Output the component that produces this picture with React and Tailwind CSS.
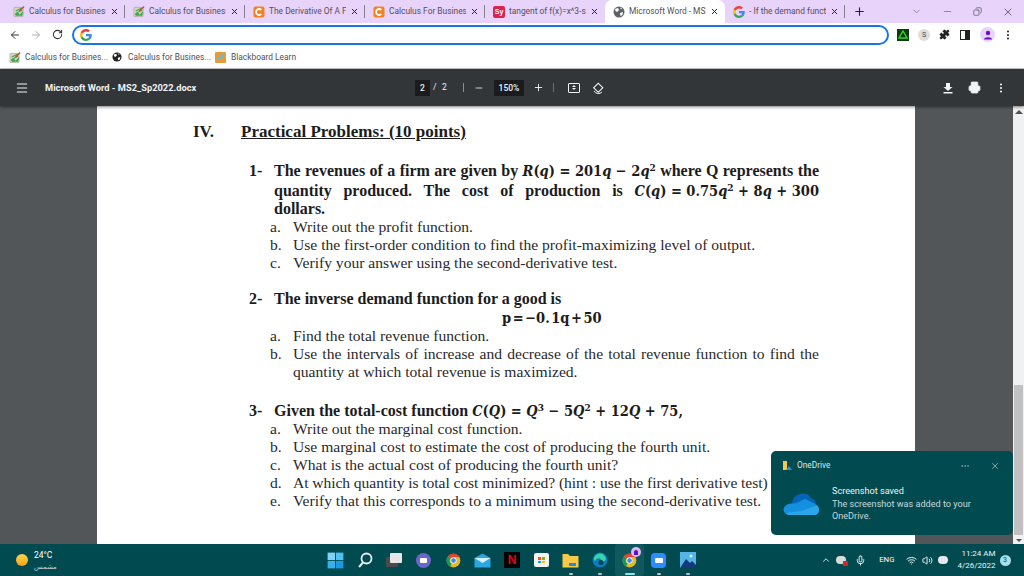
import React from 'react';
import { ArrowLeft, ArrowRight, RotateCw, ChevronDown, Minus, Plus, X, Menu, Printer, EllipsisVertical, Puzzle, Ellipsis, ChevronUp, Mic, Wifi, Volume2, Copy } from 'lucide-react';

const Calc = () => (
  <svg width="12" height="13" viewBox="0 0 13 13" className="shrink-0">
    <rect x="1" y="2" width="10" height="10" rx="1" fill="#d8d4c8" stroke="#9a9a8c" strokeWidth="0.6" />
    <path d="M2 9 L5 7 L7 10 L11 6 L10 11 L3 11Z" fill="#3aa84a" />
    <path d="M3 6 L9 3 M4 8 L10 5" stroke="#3aa84a" strokeWidth="1.2" />
    <path d="M7 6 L12 1" stroke="#c0502c" strokeWidth="1.5" />
  </svg>
);
const CIcon = () => (
  <svg width="12" height="12" viewBox="0 0 12 12" className="shrink-0">
    <rect width="11" height="11" x="0.5" y="0.5" rx="2" fill="#f5821f" />
    <path d="M8.3 4 A3 3 0 1 0 8.3 8" stroke="#fff" strokeWidth="1.8" fill="none" />
  </svg>
);
const Sy = () => (
  <div className="w-[12px] h-[12px] rounded-[2px] bg-[#dc2350] text-white text-[7px] font-bold leading-[12px] text-center shrink-0 font-['Liberation_Sans',sans-serif]">Sy</div>
);
const Globe = ({ s = 12, c = '#5f6368' }) => (
  <svg width={s} height={s} viewBox="0 0 12 12" className="shrink-0">
    <circle cx="6" cy="6" r="5.5" fill={c} />
    <path d="M2 3 L5 2 L6 4 L4 6 L2.5 5Z M7 7 L10 6 L9.5 9 L7.5 10Z M7 1.5 L9 2.5 L8 3.5Z" fill="#fff" />
  </svg>
);
const G = () => (
  <svg width="12" height="12" viewBox="0 0 48 48" className="shrink-0">
    <path fill="#EA4335" d="M24 9.5c3.5 0 6.700 1.200 9.200 3.600l6.900-6.900C35.900 2.400 30.400 0 24 0 14.600 0 6.500 5.400 2.600 13.200l8 6.200C12.500 13.700 17.800 9.500 24 9.500z" />
    <path fill="#4285F4" d="M47 24.500c0-1.600-.1-3.100-.4-4.500H24v9h12.900c-.6 3-2.200 5.500-4.700 7.200l7.700 6c4.500-4.200 7.100-10.300 7.100-17.700z" />
    <path fill="#FBBC05" d="M10.500 28.600c-.5-1.500-.8-3-.8-4.600s.3-3.100.8-4.600l-8-6.200C.9 16.500 0 20.100 0 24s.9 7.500 2.600 10.800l7.900-6.200z" />
    <path fill="#34A853" d="M24 48c6.500 0 11.900-2.100 15.900-5.800l-7.700-6c-2.200 1.400-4.900 2.300-8.200 2.300-6.200 0-11.500-4.200-13.400-9.900l-8 6.200C6.500 42.600 14.600 48 24 48z" />
  </svg>
);

const Tab = ({ icon, text, active, sep = true }) => (
  <div className={`relative flex items-center w-[120px] h-[23px] pl-[8px] pr-[6px] gap-[4px] ${active ? 'bg-white rounded-t-[7px]' : ''}`}>
    {icon}
    <span className="flex-1 min-w-0 overflow-hidden whitespace-nowrap text-[8.4px] text-[#50505a]">{text}</span>
    <X size={9} strokeWidth={2.6} className="text-[#222] shrink-0" />
    {sep && <div className="absolute right-0 top-[5px] h-[13px] w-px bg-[#85808a]" />}
  </div>
);

const Line = ({ cls = '', children }) => <div className={`h-[18px] leading-[18px] whitespace-nowrap ${cls}`}>{children}</div>;
const M = ({ children, cls = '' }) => <span className={`inline-block font-['DejaVu_Serif_Condensed','DejaVu_Serif',serif] text-[14.500px] font-bold [text-align-last:left] ${cls}`}>{children}</span>;
const I = ({ children }) => <span className="italic">{children}</span>;
const Sup = ({ children }) => <span className="text-[10px] leading-none align-[5px]">{children}</span>;
const Sub = ({ l, children }) => (
  <div className="flex h-[18px] leading-[18px] whitespace-nowrap pl-[21px] text-[#2a2a2a]">
    <span className="w-[23px] shrink-0">{l}.</span>
    <span>{children}</span>
  </div>
);
const Num = ({ n, children, cls = '' }) => (
  <div className={`flex h-[20px] leading-[20px] font-bold whitespace-nowrap text-[#1c1c1c] text-[16px] ${cls}`}>
    <span className="w-[25px] shrink-0">{n ? `${n}-` : ''}</span>
    {children}
  </div>
);

const tb = 'text-[#f1f3f4]';
const Win = () => (
  <svg width="21" height="21" viewBox="0 0 24 24"><rect x="3" y="3" width="8.500" height="8.500" fill="#7ed3f7" /><rect x="12.500" y="3" width="8.500" height="8.500" fill="#4fc0f2" /><rect x="3" y="12.500" width="8.500" height="8.500" fill="#36b1ec" /><rect x="12.500" y="12.500" width="8.500" height="8.500" fill="#1a9ae0" /></svg>
);
const Chrome = ({ s = 18 }) => (
  <svg width={s} height={s} viewBox="0 0 24 24">
    <circle cx="12" cy="12" r="11" fill="#e8b923" />
    <path d="M12 1 A11 11 0 0 1 21.500 6.500 L12 6.500 A5.500 5.500 0 0 0 7.200 9.300 L3 5 A11 11 0 0 1 12 1Z" fill="#db4437" />
    <path d="M3 5 L7.200 9.300 A5.500 5.500 0 0 0 9 17 L6.300 21.500 A11 11 0 0 1 3 5Z" fill="#0f9d58" />
    <circle cx="12" cy="12" r="4.500" fill="#4285f4" stroke="#fff" strokeWidth="1.500" />
  </svg>
);
const TaskIcon = ({ children, dot, active }) => (
  <div className={`relative w-[29.4px] h-[32px] flex items-center justify-center ${active ? 'bg-[#11585e] rounded-[3px]' : ''}`}>
    {children}
    {dot && <div className={`absolute bottom-[1px] left-1/2 -translate-x-1/2 h-[2px] rounded-full ${active ? 'w-[10px] bg-[#8fe3ea]' : 'w-[4px] bg-[#b8c4c6]'}`} />}
  </div>
);

export default function App() {
  return (
    <div className="relative w-[1024px] h-[576px] overflow-hidden flex flex-col bg-white font-['Roboto',sans-serif]">
      {/* tab strip */}
      <div className="h-[23px] bg-[#e8d3fb] flex items-center pl-[5px] shrink-0">
        <Tab icon={<Calc />} text="Calculus for Business I" />
        <Tab icon={<Calc />} text="Calculus for Business I" />
        <Tab icon={<CIcon />} text="The Derivative Of A Function" />
        <Tab icon={<CIcon />} text="Calculus For Business" />
        <Tab icon={<Sy />} text="tangent of f(x)=x^3-sin" sep={false} />
        <Tab icon={<Globe />} text="Microsoft Word - MS2_Sp" active sep={false} />
        <Tab icon={<G />} text="- If the demand function" />
        <Plus size={13} strokeWidth={2} className="text-[#222] ml-[8px]" />
        <div className="flex-1" />
        <ChevronDown size={11} className="text-[#8a8494] mr-[20px]" />
        <Minus size={11} className="text-[#8a8494] mr-[20px]" />
        <Copy size={9} className="text-[#5f5a68] mr-[20px] -scale-x-100" />
        <X size={12} className="text-[#6a6474] mr-[10px]" />
      </div>
      {/* address row */}
      <div className="h-[23px] flex items-center shrink-0 pl-[9px]">
        <ArrowLeft size={12} strokeWidth={2} className="text-[#333]" />
        <ArrowRight size={12} strokeWidth={2} className="text-[#b0b0b0] ml-[9px]" />
        <RotateCw size={11} strokeWidth={2.2} className="text-[#333] ml-[10px]" />
        <div className="ml-[9px] w-[817px] h-[20px] rounded-full border-2 border-[#1a73e8] flex items-center pl-[6px]"><G /></div>
        <div className="w-[12px] h-[12px] ml-[8px] bg-[#0c3b12] flex items-center justify-center">
          <svg width="10" height="10" viewBox="0 0 10 10"><path d="M5 1 L9 8 L1 8Z" fill="none" stroke="#37d41f" strokeWidth="1.400" /></svg>
        </div>
        <div className="w-[12px] h-[12px] ml-[9px] rounded-full bg-[#dcdcdc] text-[7px] leading-[12px] text-center text-[#444]">S</div>
        <Puzzle size={11} fill="#222" strokeWidth={1} className="text-[#222] ml-[9px]" />
        <div className="w-[10px] h-[10px] ml-[10px] border-[1.5px] border-[#222] flex justify-end"><div className="w-[4px] h-full bg-[#222]" /></div>
        <div className="w-[15px] h-[15px] ml-[10px] rounded-full bg-[#e8d3fb] flex items-center justify-center">
          <svg width="10" height="10" viewBox="0 0 10 10"><circle cx="5" cy="3" r="2.200" fill="#6a0dc4" /><path d="M1 9.500 C1 6.500 9 6.500 9 9.500Z" fill="#6a0dc4" /></svg>
        </div>
        <EllipsisVertical size={12} strokeWidth={2.4} className="text-[#333] ml-[7px]" />
      </div>
      {/* bookmarks */}
      <div className="h-[22px] flex items-center shrink-0 pl-[9px] text-[8.4px] text-[#50505a] border-b border-[#cfcfcf] box-content">
        <Calc />
        <span className="ml-[4px] w-[76px] whitespace-nowrap">Calculus for Busines...</span>
        <span className="ml-[11px]"><Globe c="#222" s={10} /></span>
        <span className="ml-[6px] w-[76px] whitespace-nowrap">Calculus for Busines...</span>
        <div className="ml-[11px] w-[11px] h-[11px] rounded-[1px] bg-[#e89a35] flex items-center justify-center">
          <div className="w-[8px] h-[2px] bg-[#5cc0e8] -rotate-45" />
        </div>
        <span className="ml-[5px] whitespace-nowrap">Blackboard Learn</span>
      </div>
      {/* pdf toolbar */}
      <div className={`h-[37px] bg-[#323639] shrink-0 flex items-center ${tb} relative z-10 shadow-[0_1px_3px_rgba(0,0,0,0.5)]`}>
        <Menu size={14} strokeWidth={1.800} className="ml-[15px]" />
        <span className="ml-[16px] w-[370px] text-[9.300px] font-bold whitespace-nowrap">Microsoft Word - MS2_Sp2022.docx</span>
        <span className="w-[15px] h-[16px] bg-[#191b1c] text-[8.500px] font-medium leading-[16px] text-center">2</span>
        <span className="ml-[3px] text-[8.500px] w-[9px]">/</span>
        <span className="text-[8.500px] w-[21px]">2</span>
        <div className="w-px h-[9px] bg-[#8a8d90]" />
        <Minus size={10} strokeWidth={2} className="ml-[10px]" />
        <span className="ml-[10px] w-[30px] h-[16px] bg-[#191b1c] text-[8.500px] font-medium leading-[16px] text-center">150%</span>
        <Plus size={11} strokeWidth={2} className="ml-[9px]" />
        <div className="w-px h-[9px] bg-[#6a6d70] ml-[9px]" />
        <div className="ml-[14px] w-[12px] h-[10px] border border-[#f1f3f4] rounded-[1px] flex flex-col items-center justify-center gap-[1px]">
          <div className="w-0 h-0 border-x-[2px] border-x-transparent border-b-[2px] border-b-[#f1f3f4]" />
          <div className="w-0 h-0 border-x-[2px] border-x-transparent border-t-[2px] border-t-[#f1f3f4]" />
        </div>
        <svg width="14" height="14" viewBox="0 0 14 14" className="ml-[11px]"><rect x="4" y="3.500" width="6.500" height="6.500" transform="rotate(45 7.250 6.750)" fill="none" stroke="#f1f3f4" strokeWidth="1.100" /><path d="M3 10 A5 5 0 0 0 11 11" fill="none" stroke="#f1f3f4" strokeWidth="1" /></svg>
        <div className="flex-1" />
        <svg width="12" height="12" viewBox="0 0 12 12" className="mr-[13.500px]"><path d="M4 1 H8 V5 H10.500 L6 9 L1.500 5 H4Z M1.500 10 H10.500 V11.500 H1.500Z" fill="#f1f3f4" /></svg>
        <Printer size={13} fill="#f1f3f4" strokeWidth={1.600} className="mr-[14.500px]" />
        <EllipsisVertical size={12} strokeWidth={2.400} className="mr-[17px]" />
      </div>
      {/* content */}
      <div className="flex-1 min-h-0 flex bg-[#525659]">
        <div className="flex-1 min-w-0 pl-[97px]">
          <div className="w-[818px] h-full bg-white font-['Liberation_Serif',serif] text-[15.600px] text-[#222] pt-[15px] overflow-hidden">
            <div className="flex h-[22px] leading-[22px] font-bold text-[#1c1c1c] pl-[96px] text-[17px]">
              <span className="w-[48px]">IV.</span>
              <span className="underline">Practical Problems: (10 points)</span>
            </div>
            <div className="pl-[152px] mt-[18px]">
              <Num n="1">
                <span className="w-[545px] [text-align-last:justify]">The revenues of a firm are given by <M><I>R</I>(<I>q</I>) = 201<I>q</I> − 2<I>q</I><Sup>2</Sup></M> where Q represents the</span>
              </Num>
              <Num n="">
                <span className="w-[545px] [text-align-last:justify]">quantity produced. The cost of production is <M><I>C</I>(<I>q</I>) = 0.75<I>q</I><Sup>2</Sup> + 8<I>q</I> + 300</M></span>
              </Num>
              <Line cls="pl-[25px] font-bold text-[#1c1c1c] text-[16px] -mt-[1px]">dollars.</Line>
              <Sub l="a">Write out the profit function.</Sub>
              <Sub l="b">Use the first-order condition to find the profit-maximizing level of output.</Sub>
              <Sub l="c">Verify your answer using the second-derivative test.</Sub>
              <Num n="2" cls="mt-[17px]">The inverse demand function for a good is</Num>
              <div className="h-[18px] leading-[18px] pl-[253px] text-[#1c1c1c]"><M cls="[word-spacing:-3px]">p = −0. 1q + 50</M></div>
              <Sub l="a">Find the total revenue function.</Sub>
              <div className="flex h-[18px] leading-[18px] whitespace-nowrap pl-[21px] text-[#2a2a2a]">
                <span className="w-[23px] shrink-0">b.</span>
                <span className="w-[526px] [text-align-last:justify]">Use the intervals of increase and decrease of the total revenue function to find the</span>
              </div>
              <Line cls="pl-[44px] text-[#2a2a2a]">quantity at which total revenue is maximized.</Line>
              <Num n="3" cls="mt-[20px]">Given the total-cost function <span className="ml-[4px]"><M><I>C</I>(<I>Q</I>) = <I>Q</I><Sup>3</Sup> − 5<I>Q</I><Sup>2</Sup> + 12<I>Q</I> + 75,</M></span></Num>
              <div className="-mt-[1px]" />
              <Sub l="a">Write out the marginal cost function.</Sub>
              <Sub l="b">Use marginal cost to estimate the cost of producing the fourth unit.</Sub>
              <Sub l="c">What is the actual cost of producing the fourth unit?</Sub>
              <Sub l="d"><span className="tracking-[-0.07px]">At which quantity is total cost minimized? (hint : use the first derivative test)</span></Sub>
              <Sub l="e">Verify that this corresponds to a minimum using the second-derivative test.</Sub>
            </div>
          </div>
        </div>
        <div className="w-[11px] bg-[#f1f1f1] flex flex-col items-center shrink-0">
          <div className="h-[12px] flex items-center justify-center">
            <div className="w-0 h-0 border-x-[4px] border-x-transparent border-b-[4px] border-b-[#505050]" />
          </div>
          <div className="w-[9px] h-[150px] bg-[#c1c1c1] mt-[267px]" />
          <div className="flex-1" />
          <div className="h-[8px] flex items-center justify-center">
            <div className="w-0 h-0 border-x-[3px] border-x-transparent border-t-[3px] border-t-[#505050]" />
          </div>
        </div>
      </div>
      {/* taskbar */}
      <div className="h-[32px] bg-[#004a50] shrink-0 flex items-center text-white relative">
        <div className="ml-[16px] w-[12px] h-[12px] rounded-full bg-gradient-to-b from-[#fdd44a] to-[#f5a30f]" />
        <div className="ml-[6px] w-[287px] flex flex-col leading-none">
          <span className="text-[8.500px] mt-[1px]">24°C</span>
          <span className="text-[7px] text-[#c4d4d6] mt-[3px] font-['Noto_Sans',sans-serif]">مشمس</span>
        </div>
        <TaskIcon><Win /></TaskIcon>
        <TaskIcon>
          <svg width="18" height="18" viewBox="0 0 18 18"><circle cx="10.500" cy="7.500" r="5" fill="none" stroke="#e8eeee" strokeWidth="1.800" /><path d="M7 11.500 L3 16" stroke="#e8eeee" strokeWidth="2" /></svg>
        </TaskIcon>
        <TaskIcon>
          <div className="relative w-[16px] h-[14px]">
            <div className="absolute left-0 bottom-0 w-[12px] h-[10px] bg-[#4a4a4a] rounded-[1px]" />
            <div className="absolute right-0 top-0 w-[12px] h-[10px] bg-[#e6e6e6] rounded-[1px]" />
          </div>
        </TaskIcon>
        <TaskIcon>
          <div className="w-[15px] h-[15px] rounded-full bg-[#6b66c9] flex items-center justify-center"><div className="w-[7px] h-[5px] bg-white rounded-[1px]" /></div>
        </TaskIcon>
        <TaskIcon><Chrome s={15} /></TaskIcon>
        <TaskIcon>
          <svg width="17" height="15" viewBox="0 0 17 15"><path d="M0.500 5 L8.500 0.500 L16.500 5 L16.500 14.500 L0.500 14.500Z" fill="#29a7e1" /><path d="M0.500 5 L8.500 10 L16.500 5" fill="#d8f0fb" /></svg>
        </TaskIcon>
        <TaskIcon>
          <div className="w-[16px] h-[16px] bg-black flex items-center justify-center text-[#e50914] font-bold text-[12px] font-['Liberation_Sans',sans-serif]">N</div>
        </TaskIcon>
        <TaskIcon>
          <div className="w-[15px] h-[14px] bg-[#f4f4f4] rounded-[2px] grid grid-cols-2 gap-[1px] p-[4px]">
            <div className="bg-[#f25022]" /><div className="bg-[#7fba00]" /><div className="bg-[#00a4ef]" /><div className="bg-[#ffb900]" />
          </div>
        </TaskIcon>
        <TaskIcon dot>
          <svg width="17" height="15" viewBox="0 0 17 15"><path d="M0.500 1 L6 1 L8 3 L16.500 3 L16.500 14.500 L0.500 14.500Z" fill="#f7c948" /><rect x="7" y="10" width="7" height="3" fill="#1d8ecf" /></svg>
        </TaskIcon>
        <TaskIcon dot>
          <svg width="16" height="16" viewBox="0 0 16 16"><circle cx="8" cy="8" r="7.500" fill="#0c7bc4" /><path d="M2 8 A6 6 0 0 1 14 7 C14 10 9 10 9 8 C9 6 5 5 3 9Z" fill="#3ad3a8" /><circle cx="9" cy="10.500" r="2.500" fill="#004a50" /></svg>
        </TaskIcon>
        <TaskIcon dot active>
          <Chrome s={15} />
          <div className="absolute top-[3px] right-[3px] w-[10px] h-[10px] rounded-full bg-[#d9bdf2] flex items-center justify-center"><div className="w-[4px] h-[5px] bg-[#6a0dc4] rounded-t-full" /></div>
        </TaskIcon>
        <TaskIcon dot>
          <div className="w-[15px] h-[15px] rounded-[4px] bg-[#2d8cff] flex items-center justify-center"><div className="w-[8px] h-[5px] bg-white rounded-[1px]" /></div>
        </TaskIcon>
        <TaskIcon dot>
          <svg width="16" height="16" viewBox="0 0 16 16"><rect width="16" height="16" fill="#55b5e6" /><path d="M0 16 L6 7 L10 11 L12 9 L16 13 L16 16Z" fill="#143a7b" /><circle cx="11" cy="4" r="1.500" fill="#d8f0fb" /></svg>
        </TaskIcon>
        <div className="flex-1" />
        <ChevronUp size={10} strokeWidth={2} className="text-white mr-[5px]" />
        <div className="relative w-[10px] h-[8px] bg-[#d8dcdc] rounded-full mr-[9px]">
          <div className="absolute -bottom-[2px] -right-[2px] w-[5px] h-[5px] bg-[#d9232e]" />
        </div>
        <Mic size={11} className="text-white mr-[13px]" />
        <span className="text-[7.800px] mr-[11px]">ENG</span>
        <Wifi size={11} className="text-white mr-[5px]" />
        <Volume2 size={11} className="text-white mr-[5px]" />
        <div className="w-[10px] h-[8px] bg-[#e4e8e8] rounded-full mr-[10px]" />
        <div className="flex flex-col items-end text-[8px] leading-[12px] text-[#eef4f4] w-[38px]">
          <span>11:24 AM</span>
          <span>4/26/2022</span>
        </div>
        <div className="w-[11px] h-[11px] rounded-full bg-[#a9dfe6] text-[#004a50] text-[7px] leading-[11px] text-center ml-[4px] mr-[13.500px]">3</div>
      </div>
      {/* toast */}
      <div className="absolute left-[771px] top-[451px] w-[242px] h-[84px] rounded-[5px] bg-[#004a50] text-white font-['Roboto',sans-serif]">
        <div className="flex items-center h-[19px] mt-[5px] pl-[12px] absolute inset-x-0 top-0">
          <svg width="9" height="9" viewBox="0 0 9 9"><rect x="0" y="0" width="4" height="9" fill="#f7c948" /><path d="M3 9 L6 5 L9 9Z" fill="#2a8fd8" /></svg>
          <span className="ml-[5px] text-[8.300px] text-[#dfe9ea]">OneDrive</span>
          <div className="flex-1" />
          <Ellipsis size={10} className="text-[#8aa4a6] mr-[20px]" />
          <X size={10} className="text-[#9db4b6] mr-[13px]" />
        </div>
        <div className="absolute left-[12px] top-[40px]">
          <svg width="37" height="24" viewBox="0 0 37 24">
            <path d="M9 13 A10.500 10.500 0 0 1 28 7 A8 8 0 0 1 33 13 L20 20Z" fill="#0364b8" />
            <path d="M9 13 A9 9 0 0 0 3 15 L12 24 L20 20 L14 11Z M14 11 L22 8 L33 13 L20 20Z" fill="#0f78d4" />
            <path d="M9 12.500 C3 12 -2 18 2 22 C3 23.500 5 24 7 24 L31 24 C37 24 38 15 32 13 L22 8 C17 10 14 14 9 12.500Z" fill="#1490df" />
            <path d="M3 22 C4 23.500 5 24 7 24 L31 24 C36 24 37.500 18 34 14.500 L18 20Z" fill="#28a8ea" />
          </svg>
        </div>
        <div className="absolute left-[61px] top-[34px] text-[9.100px] leading-[12.500px] text-[#c9d8d9]">
          <div className="text-[#eef4f4]">Screenshot saved</div>
          <div>The screenshot was added to your</div>
          <div>OneDrive.</div>
        </div>
      </div>
    </div>
  );
}
